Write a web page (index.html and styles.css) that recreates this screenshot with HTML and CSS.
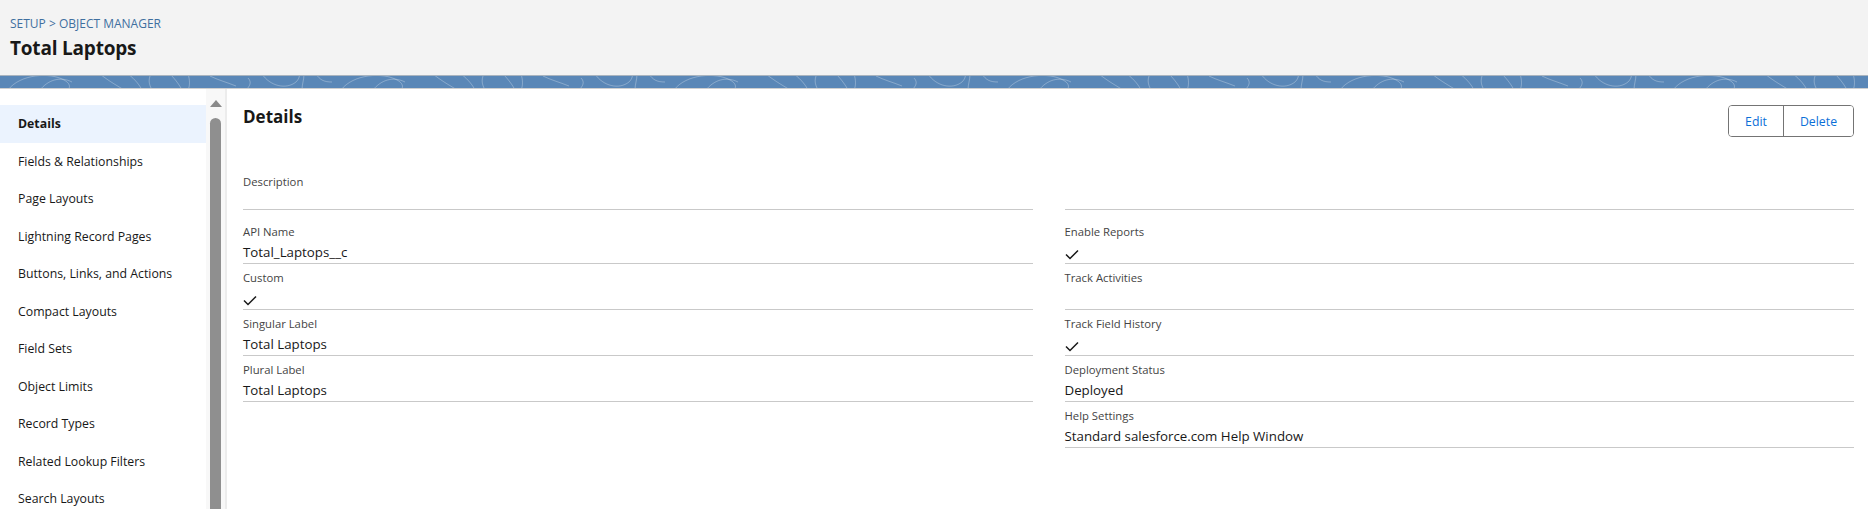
FILE: index.html
```html
<!DOCTYPE html>
<html lang="en">
<head>
<meta charset="utf-8">
<title>Total Laptops</title>
<link rel="stylesheet" href="styles.css">
</head>
<body>
<header class="page-header">
  <div class="breadcrumb"><a href="#">SETUP</a> &gt; <a href="#">OBJECT MANAGER</a></div>
  <h1 class="page-title">Total Laptops</h1>
</header>
<div class="band">
  <svg class="band-art" width="100%" height="12" xmlns="http://www.w3.org/2000/svg">
    <defs>
      <pattern id="swirl" x="0" y="0" width="333" height="12" patternUnits="userSpaceOnUse">
        <g fill="none" stroke="rgba(255,255,255,0.28)" stroke-width="1">
          <path d="M8 14 C20 -2 50 -4 64 4 C72 8 70 14 66 14"/>
          <path d="M40 14 C48 4 60 0 72 6"/>
          <path d="M100 -2 C110 6 118 10 124 14"/>
          <path d="M128 -2 C136 4 140 10 142 14"/>
          <path d="M150 0 C148 6 150 10 152 14"/>
          <path d="M170 -2 C176 4 180 10 182 14"/>
          <path d="M188 -2 C190 4 190 10 188 14"/>
          <path d="M210 0 C218 4 226 6 236 10"/>
          <path d="M248 2 C252 6 250 10 246 14"/>
          <path d="M262 -2 C270 10 286 14 296 6 C300 2 300 -2 298 -2"/>
          <path d="M304 -2 C304 4 302 8 302 14"/>
          <path d="M316 -2 C320 4 324 6 332 6"/>
        </g>
      </pattern>
    </defs>
    <rect width="100%" height="12" fill="url(#swirl)"/>
  </svg>
</div>
<main class="main">
  <nav class="sidebar">
    <ul class="nav-list">
      <li class="nav-item active">Details</li>
      <li class="nav-item">Fields &amp; Relationships</li>
      <li class="nav-item">Page Layouts</li>
      <li class="nav-item">Lightning Record Pages</li>
      <li class="nav-item">Buttons, Links, and Actions</li>
      <li class="nav-item">Compact Layouts</li>
      <li class="nav-item">Field Sets</li>
      <li class="nav-item">Object Limits</li>
      <li class="nav-item">Record Types</li>
      <li class="nav-item">Related Lookup Filters</li>
      <li class="nav-item">Search Layouts</li>
    </ul>
    <div class="scrollbar">
      <div class="scroll-up"></div>
      <div class="scroll-thumb"></div>
    </div>
  </nav>
  <section class="content">
    <div class="content-head">
      <h2 class="content-title">Details</h2>
      <div class="btn-group">
        <button class="btn">Edit</button>
        <button class="btn">Delete</button>
      </div>
    </div>
    <div class="grid desc-grid">
      <div class="field field-empty"><div class="label">Description</div><div class="value"></div></div>
      <div class="field field-empty"><div class="label"></div><div class="value"></div></div>
    </div>
    <div class="grid">
      <div class="col">
        <div class="field"><div class="label">API Name</div><div class="value">Total_Laptops__c</div></div>
        <div class="field"><div class="label">Custom</div><div class="value check-value"><svg class="check" width="14" height="11" viewBox="0 0 14 11"><path d="M1 5.5 L5 9.5 L13 1.5" fill="none" stroke="#181818" stroke-width="1.5"/></svg></div></div>
        <div class="field"><div class="label">Singular Label</div><div class="value">Total Laptops</div></div>
        <div class="field"><div class="label">Plural Label</div><div class="value">Total Laptops</div></div>
      </div>
      <div class="col">
        <div class="field"><div class="label">Enable Reports</div><div class="value check-value"><svg class="check" width="14" height="11" viewBox="0 0 14 11"><path d="M1 5.5 L5 9.5 L13 1.5" fill="none" stroke="#181818" stroke-width="1.5"/></svg></div></div>
        <div class="field"><div class="label">Track Activities</div><div class="value"></div></div>
        <div class="field"><div class="label">Track Field History</div><div class="value check-value"><svg class="check" width="14" height="11" viewBox="0 0 14 11"><path d="M1 5.5 L5 9.5 L13 1.5" fill="none" stroke="#181818" stroke-width="1.5"/></svg></div></div>
        <div class="field"><div class="label">Deployment Status</div><div class="value">Deployed</div></div>
        <div class="field"><div class="label">Help Settings</div><div class="value">Standard salesforce.com Help Window</div></div>
      </div>
    </div>
  </section>
</main>
</body>
</html>
```
FILE: styles.css
```css
* { box-sizing: border-box; }
html, body { margin: 0; padding: 0; }
body {
  width: 1868px;
  height: 509px;
  overflow: hidden;
  background: #ffffff;
  font-family: "Segoe UI", "Open Sans", "Noto Sans", sans-serif;
  color: #181818;
}
.page-header {
  height: 76px;
  background: #f3f3f3;
  border-bottom: 1px solid #a9b4bf;
  padding: 15px 10px 0 10px;
}
.breadcrumb {
  font-size: 12px;
  line-height: 18px;
  color: #3f6f9f;
}
.breadcrumb a { color: #3f6f9f; text-decoration: none; }
.page-title {
  margin: 2px 0 0 0;
  font-size: 19px;
  line-height: 26px;
  font-weight: 700;
  color: #181818;
  letter-spacing: -0.2px;
}
.band {
  height: 13px;
  background: #5a87b7;
  border-bottom: 1px solid #cfcfcf;
  overflow: hidden;
}
.band-art { display: block; }
.main {
  display: flex;
  height: 420px;
  overflow: hidden;
}
.sidebar {
  display: flex;
  width: 227px;
  flex: none;
  border-right: 2px solid #ececec;
}
.nav-list {
  list-style: none;
  margin: 0;
  padding: 16px 0 0 0;
  width: 206px;
  flex: none;
}
.nav-item {
  height: 37.5px;
  line-height: 37.5px;
  padding-left: 18px;
  font-size: 12.3px;
  color: #181818;
  white-space: nowrap;
}
.nav-item.active {
  background: #ebf3fe;
  font-weight: 700;
}
.scrollbar {
  width: 19px;
  flex: none;
  background: #f8f8f8;
  display: flex;
  flex-direction: column;
  align-items: center;
  padding-top: 11px;
}
.scroll-up {
  width: 0;
  height: 0;
  border-left: 6px solid transparent;
  border-right: 6px solid transparent;
  border-bottom: 7px solid #8a8a8a;
}
.scroll-thumb {
  margin-top: 11px;
  width: 11px;
  flex: 1;
  background: #8f8f8f;
  border-radius: 6px 6px 0 0;
}
.content {
  flex: 1;
  padding: 16px 14px 0 16px;
}
.content-head {
  display: flex;
  justify-content: space-between;
  align-items: flex-start;
  margin-bottom: 31px;
}
.content-title {
  margin: 0;
  font-size: 17px;
  line-height: 24px;
  font-weight: 700;
  color: #181818;
}
.btn-group {
  display: flex;
  height: 32px;
  border: 1px solid #747474;
  border-radius: 4px;
  overflow: hidden;
}
.btn {
  border: none;
  background: #ffffff;
  font-family: inherit;
  font-size: 12.3px;
  color: #0b6fd8;
  padding: 0;
  height: 30px;
}
.btn:first-child { width: 55px; border-right: 1px solid #747474; }
.btn:last-child { width: 69px; }
.grid {
  display: grid;
  grid-template-columns: 1fr 1fr;
  column-gap: 32px;
}
.desc-grid { margin-bottom: 8px; }
.field {
  padding-top: 5px;
  border-bottom: 1px solid #c9c9c9;
}
.label {
  font-size: 11.3px;
  line-height: 18px;
  height: 18px;
  color: #444444;
}
.value {
  font-size: 13.3px;
  line-height: 22px;
  height: 22px;
  color: #181818;
}
.field-empty .value { height: 18px; }
.check-value {
  display: flex;
  align-items: flex-start;
  padding-top: 8px;
}
.check { display: block; }
```
